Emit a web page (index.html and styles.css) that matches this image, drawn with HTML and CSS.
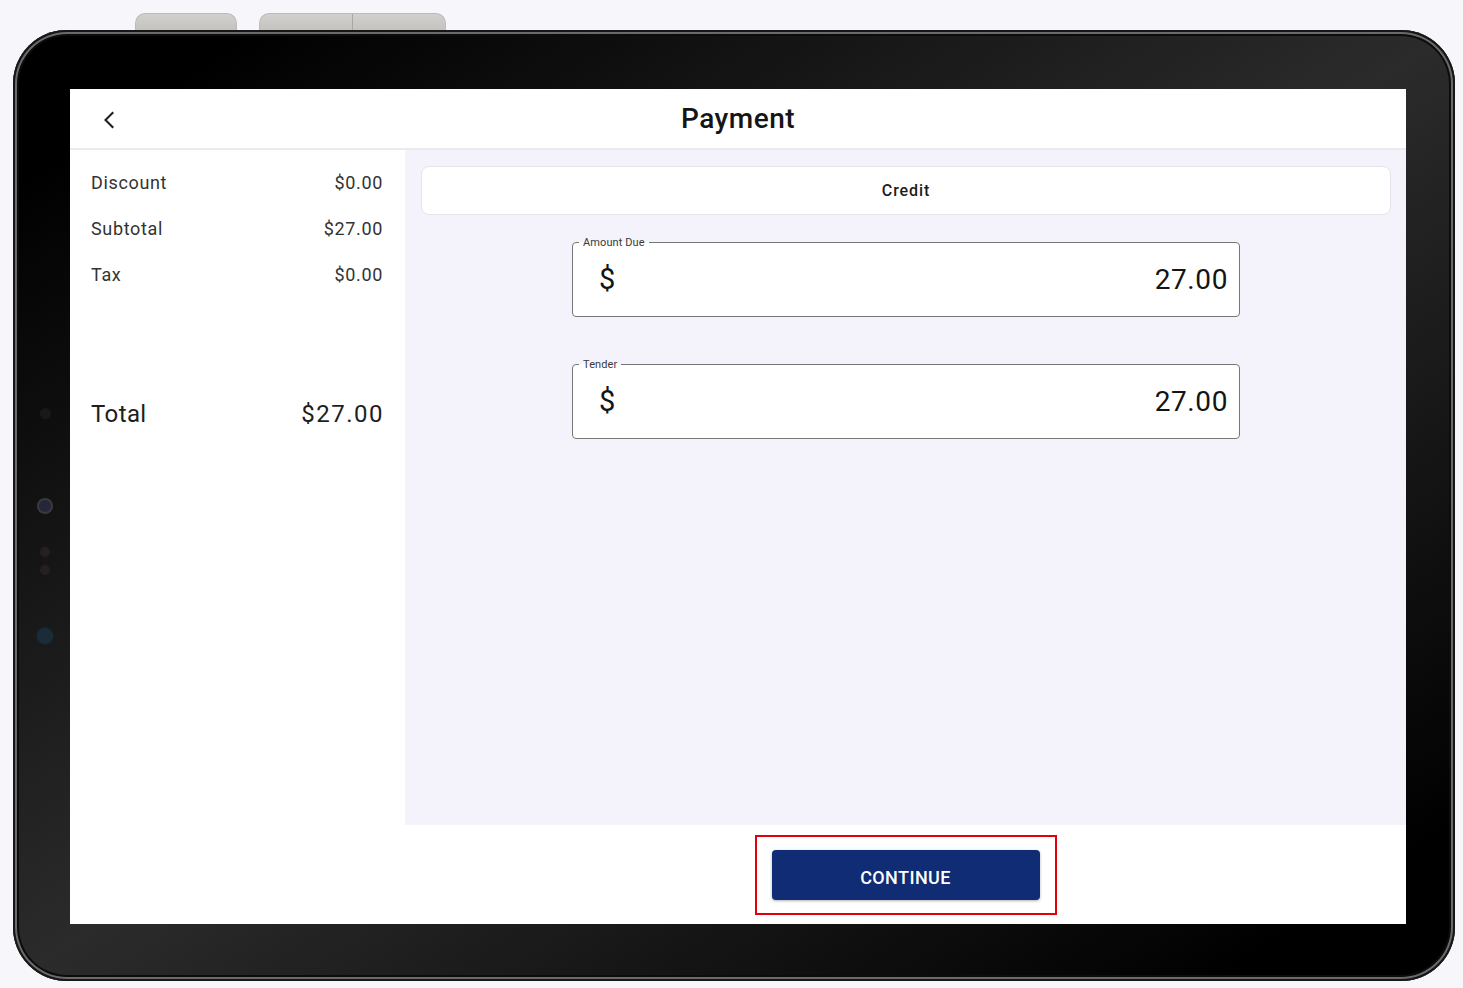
FILE: index.html
```html
<!DOCTYPE html>
<html lang="en">
<head>
<meta charset="utf-8">
<title>Payment</title>
<link rel="stylesheet" href="styles.css">
</head>
<body>
  <div class="hw-buttons">
    <div class="hw-btn hw-power"></div>
    <div class="hw-btn hw-volume"><span></span><span></span></div>
  </div>
  <div class="device">
    <div class="sensors">
      <span class="dot d1"></span>
      <span class="dot d2"></span>
      <span class="dot d3"></span>
      <span class="dot d4"></span>
      <span class="dot d5"></span>
    </div>
    <div class="screen">
      <header class="appbar">
        <button class="back" aria-label="Back">
          <svg width="14" height="18" viewBox="0 0 14 18"><polyline points="10.5,2 3.5,9 10.5,16" fill="none" stroke="#1f1f1f" stroke-width="2.1" stroke-linecap="square"/></svg>
        </button>
        <h1 class="title">Payment</h1>
      </header>
      <div class="main">
        <aside class="summary">
          <div class="lines">
            <div class="line"><span>Discount</span><span>$0.00</span></div>
            <div class="line"><span>Subtotal</span><span>$27.00</span></div>
            <div class="line"><span>Tax</span><span>$0.00</span></div>
          </div>
          <div class="line total"><span>Total</span><span class="total-val">$27.00</span></div>
        </aside>
        <section class="pay">
          <div class="pay-body">
            <div class="tab">Credit</div>
            <fieldset class="field first">
              <legend>Amount Due</legend>
              <div class="field-row"><span class="cur">$</span><span class="val">27.00</span></div>
            </fieldset>
            <fieldset class="field second">
              <legend>Tender</legend>
              <div class="field-row"><span class="cur">$</span><span class="val">27.00</span></div>
            </fieldset>
          </div>
          <div class="pay-actions">
            <div class="highlight">
              <button class="continue">CONTINUE</button>
            </div>
          </div>
        </section>
      </div>
    </div>
  </div>
</body>
</html>
```

FILE: styles.css
```css
* { box-sizing: border-box; }
html, body { margin: 0; padding: 0; }
body {
  background: #f7f7fb;
  padding-top: 13px;
  font-family: Roboto, "Noto Sans", "Liberation Sans", sans-serif;
  color: #222;
  width: 1463px;
  height: 988px;
  overflow: hidden;
}

.hw-buttons {
  display: flex;
  gap: 22px;
  margin-left: 135px;
  height: 17px;
}
.hw-btn {
  height: 17px;
  background: linear-gradient(#d2d0cd, #c5c3c0);
  border-radius: 10px 10px 0 0;
  border: 1px solid #bdbbb8;
  border-bottom: none;
}
.hw-power { width: 102px; }
.hw-volume { width: 187px; display: flex; }
.hw-volume span { flex: 1; }
.hw-volume span + span { border-left: 1px solid #a9a7a4; }

.device {
  position: relative;
  margin-left: 13px;
  width: 1442px;
  height: 951px;
  padding: 59px 49px 57px 57px;
  border-radius: 54px;
  background: linear-gradient(to bottom right, #000 8%, #2b2b2b 50%, #000 92%);
  box-shadow: inset 0 0 0 2px #161616, inset 0 0 0 4px #6a6a6a, inset 0 0 0 6px #0c0c0c;
}

.sensors { position: absolute; left: 0; top: 0; }
.dot { position: absolute; border-radius: 50%; }
.d1 { left: 27px; top: 378px; width: 11px; height: 11px; background: #19191b; }
.d2 { left: 26px; top: 470px; width: 12px; height: 12px; background: #25263a; box-shadow: 0 0 0 2px #3a3a3e; }
.d3 { left: 27px; top: 517px; width: 10px; height: 10px; background: #251f24; }
.d4 { left: 27px; top: 535px; width: 10px; height: 10px; background: #251f24; }
.d5 { left: 24px; top: 598px; width: 16px; height: 16px; background: #1a2c38; box-shadow: 0 0 3px #1a2c38; }

.screen {
  width: 100%;
  height: 100%;
  background: #fff;
  display: flex;
  flex-direction: column;
}

.appbar {
  height: 61px;
  flex: none;
  border-bottom: 2px solid #ebebee;
  display: flex;
  align-items: center;
  position: relative;
}
.back {
  background: none;
  border: none;
  padding: 0;
  margin-left: 32px;
  margin-top: 2px;
  width: 14px;
  height: 18px;
  display: flex;
}
.title {
  position: absolute;
  left: 0;
  right: 0;
  text-align: center;
  margin: 0;
  font-size: 28px;
  font-weight: 500;
  color: #151515;
  letter-spacing: 0.5px;
  pointer-events: none;
}

.main {
  flex: 1;
  display: grid;
  grid-template-columns: 335px 1fr;
  min-height: 0;
}

.summary {
  padding: 21px 22px 0 21px;
  color: #333;
}
.lines {
  display: flex;
  flex-direction: column;
  gap: 22px;
}
.line {
  display: flex;
  justify-content: space-between;
  font-size: 18px;
  line-height: 24px;
  letter-spacing: 0.65px;
}
.total {
  margin-top: 111px;
  font-size: 24px;
  line-height: 32px;
  color: #1e1e1e;
  letter-spacing: 0.4px;
}
.total-val { letter-spacing: 1.5px; margin-right: -1px; }

.pay {
  display: flex;
  flex-direction: column;
  min-height: 0;
}
.pay-body {
  flex: 1;
  background: #f4f2fa;
  padding: 16px 15px 0 16px;
}
.tab {
  height: 49px;
  background: #fff;
  border: 1px solid #e5e3ec;
  border-radius: 8px;
  display: flex;
  align-items: center;
  justify-content: center;
  font-size: 16px;
  font-weight: 500;
  letter-spacing: 0.9px;
  color: #1c1c1c;
}

.field {
  width: 668px;
  margin: 0 auto;
  padding: 0 6px;
  border: 1.5px solid #767676;
  border-radius: 4px;
  background: #fff;
  min-inline-size: 0;
}
.field.first { margin-top: 21px; }
.field.second { margin-top: 41px; }
.field legend {
  padding: 0 4px;
  font-size: 11px;
  line-height: 13px;
  color: #3a3a3a;
  letter-spacing: 0.1px;
}
.field-row {
  height: 60px;
  margin-bottom: 7px;
  display: flex;
  align-items: center;
  justify-content: space-between;
  padding: 0 5px 0 20px;
  font-size: 28px;
  color: #141414;
}
.cur { font-size: 29px; }
.val { letter-spacing: 0.6px; }

.pay-actions {
  height: 99px;
  flex: none;
  background: #fff;
  display: flex;
  align-items: center;
  justify-content: center;
}
.highlight {
  border: 2px solid #e2000c;
  padding: 13px 15px;
}
.continue {
  display: block;
  width: 268px;
  height: 50px;
  border: none;
  border-radius: 4px;
  background: #0f2c74;
  color: #fff;
  font-family: Roboto, "Noto Sans", "Liberation Sans", sans-serif;
  font-size: 18px;
  font-weight: 500;
  letter-spacing: 0.4px;
  padding: 5px 0 0;
  box-shadow: 0 1px 3px rgba(0,0,0,0.3);
}
```
